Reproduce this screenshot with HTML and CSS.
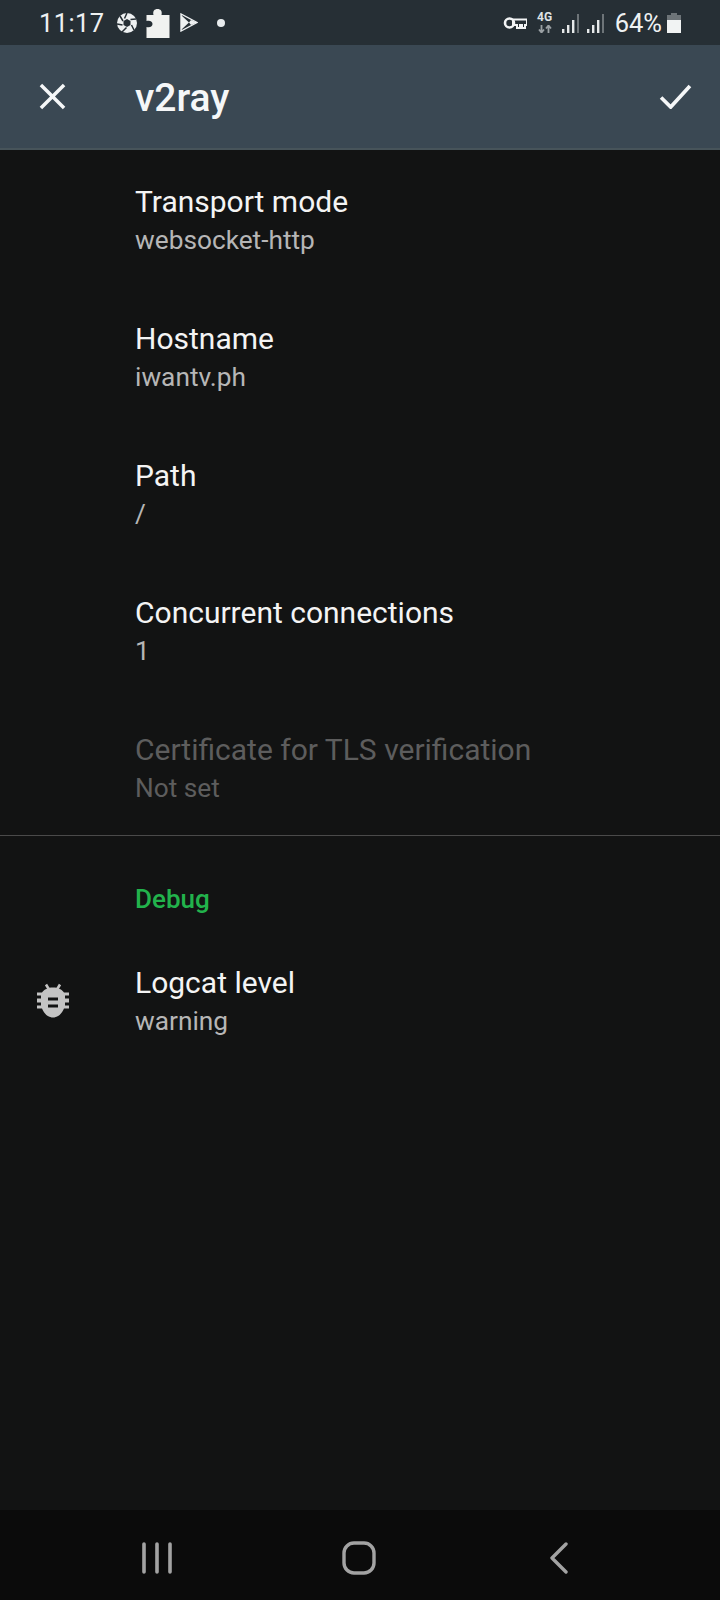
FILE: index.html
```html
<!DOCTYPE html>
<html lang="en">
<head>
<meta charset="utf-8">
<title>v2ray</title>
<link rel="stylesheet" href="styles.css">
</head>
<body>
<div class="screen">
  <div class="status">
    <div class="status-left">
      <span class="time">11:17</span>
      <svg class="ic-shutter" viewBox="0 0 20 20"><circle cx="10" cy="10" r="10" fill="#eef1f2"/><path d="M7.5 5.5 10 0M13.5 6.5 19 6M14.5 12 17 17M9.5 14.5 5 19M5.5 12 0 11M6 8 3 3" stroke="#262f35" stroke-width="1.5" fill="none"/><path d="M10 6 13.5 8V12L10 14 6.5 12V8Z" fill="#262f35"/></svg>
      <svg class="ic-puzzle" viewBox="0 0 24 30"><path d="M1 7H8C7 3 9 1 12 1S17 3 16 7H24V30H1V19C5 20 7 18 7 16S5 12 1 13Z" fill="#f1f2f0"/></svg>
      <svg class="ic-play" viewBox="0 0 18 19"><path d="M1 1V18L17 9.5Z" fill="none" stroke="#eef1f2" stroke-width="1.4"/><path d="M1 2 9 9.5 1 17ZM11 7 17 9.5 11 12 9 9.5Z" fill="#eef1f2"/></svg>
      <span class="dot"></span>
    </div>
    <div class="status-right">
      <svg class="ic-key" viewBox="0 0 24 14"><circle cx="6.5" cy="7" r="4.5" fill="none" stroke="#f2f4f5" stroke-width="2.6"/><path d="M10 3.5H24V9H22V12H19V9H17V12H14V9H10Z" fill="none" stroke="#f2f4f5" stroke-width="2"/></svg>
      <div class="net">
        <span class="net-label">4G</span>
        <svg class="ic-arrows" viewBox="0 0 14 8"><path d="M3.5 0V7M1 4.5 3.5 7.5 6 4.5" stroke="#9aa0a4" stroke-width="1.8" fill="none"/><path d="M10.5 8V1M8 3.5 10.5 .5 13 3.5" stroke="#9aa0a4" stroke-width="1.8" fill="none"/></svg>
      </div>
      <svg class="ic-signal" viewBox="0 0 20 20"><path d="M1 16h2.4v4H1zM6 12h2.4v8H6zM11 7h2.4v13H11z" fill="#e6e9ea"/><path d="M16 1h2v19h-2z" fill="#6d7478"/></svg>
      <svg class="ic-signal" viewBox="0 0 20 20"><path d="M1 16h2.4v4H1zM6 12h2.4v8H6zM11 7h2.4v13H11z" fill="#e6e9ea"/><path d="M16 1h2v19h-2z" fill="#6d7478"/></svg>
      <span class="battery-text">64%</span>
      <svg class="ic-battery" viewBox="0 0 14 20"><path d="M4 0h6v2h4v6H0V2h4z" fill="#6d7478"/><path d="M0 7h14v13H0z" fill="#f1f3f3"/></svg>
    </div>
  </div>
  <header class="toolbar">
    <svg class="ic-close" viewBox="0 0 28 28"><path d="M2 2 26 26M26 2 2 26" stroke="#f5f7f8" stroke-width="3.6" fill="none"/></svg>
    <h1 class="toolbar-title">v2ray</h1>
    <svg class="ic-check" viewBox="0 0 34 26"><path d="M2 14 12 24 32 2" stroke="#f5f7f8" stroke-width="3.8" fill="none"/></svg>
  </header>
  <main class="content">
    <div class="row"><div class="row-icon"></div><div><div class="title">Transport mode</div><div class="sub">websocket-http</div></div></div>
    <div class="row"><div class="row-icon"></div><div><div class="title">Hostname</div><div class="sub">iwantv.ph</div></div></div>
    <div class="row"><div class="row-icon"></div><div><div class="title">Path</div><div class="sub">/</div></div></div>
    <div class="row"><div class="row-icon"></div><div><div class="title">Concurrent connections</div><div class="sub">1</div></div></div>
    <div class="row disabled"><div class="row-icon"></div><div><div class="title">Certificate for TLS verification</div><div class="sub">Not set</div></div></div>
    <div class="divider"></div>
    <div class="category">Debug</div>
    <div class="row row-debug">
      <div class="row-icon">
        <svg class="ic-bug" viewBox="0 0 32 34"><path d="M9 1 12 6M23 1 20 6" stroke="#c4c4c4" stroke-width="2.6" fill="none"/><path d="M16 4C21 4 25 6 27 9H32V12H28V15H32V19H28V22H32V25H27C25 30 21 34 16 34S7 30 5 25H0V22H4V19H0V15H4V12H0V9H5C7 6 11 4 16 4Z" fill="#c4c4c4"/><path d="M11 14H21V17H11ZM11 21H21V24H11Z" fill="#121313"/></svg>
      </div>
      <div><div class="title">Logcat level</div><div class="sub">warning</div></div>
    </div>
  </main>
  <nav class="navbar">
    <svg class="ic-recents" viewBox="0 0 32 32"><path d="M3 2V30M16 2V30M29 2V30" stroke="#a3a3a3" stroke-width="3.6" stroke-linecap="round" fill="none"/></svg>
    <svg class="ic-home" viewBox="0 0 34 34"><rect x="2" y="2" width="30" height="30" rx="10" stroke="#a3a3a3" stroke-width="3.4" fill="none"/></svg>
    <svg class="ic-back" viewBox="0 0 20 32"><path d="M17 2 3 16 17 30" stroke="#a3a3a3" stroke-width="3.4" stroke-linecap="round" stroke-linejoin="round" fill="none"/></svg>
  </nav>
</div>
</body>
</html>
```
FILE: styles.css
```css
* { box-sizing: border-box; }
html, body { margin: 0; padding: 0; background: #121313; }
.screen {
  width: 720px;
  height: 1600px;
  display: flex;
  flex-direction: column;
  font-family: Roboto, "Liberation Sans", sans-serif;
  color: #fff;
  overflow: hidden;
}
.status {
  height: 45px;
  flex: none;
  background: #262f35;
  display: flex;
  justify-content: space-between;
  align-items: center;
  padding: 0 39px;
}
.status-left, .status-right { display: flex; align-items: center; }
.time { font-size: 25.5px; color: #eef1f2; letter-spacing: 0.4px; width: 78px; }
.ic-shutter { width: 20px; height: 20px; margin-right: 8px; }
.ic-puzzle { width: 25px; height: 30px; margin-right: 10px; }
.ic-play { width: 18px; height: 19px; }
.dot { width: 8px; height: 8px; border-radius: 50%; background: #e8ecee; margin-left: 19px; }
.ic-key { width: 24px; height: 14px; margin-right: 10px; }
.net { display: flex; flex-direction: column; align-items: center; width: 16px; margin-right: 8px; margin-top: -1px; }
.net-label { font-size: 12px; line-height: 12px; font-weight: 700; color: #dfe3e5; }
.ic-arrows { width: 14px; height: 8px; margin-top: 2px; }
.ic-signal { width: 20px; height: 20px; margin-right: 5px; }
.battery-text { font-size: 25.5px; color: #eef1f2; margin-left: 4px; margin-right: 5px; }
.ic-battery { width: 14px; height: 20px; }
.toolbar {
  height: 105px;
  flex: none;
  background: #3a4853;
  border-bottom: 2px solid #47545a;
  display: flex;
  align-items: center;
  padding: 0 28px 0 39px;
}
.ic-close { width: 27px; height: 27px; flex: none; }
.toolbar-title { flex: 1; margin: 2px 0 0 69px; font-size: 39px; font-weight: 500; color: #f5f7f8; }
.ic-check { width: 33px; height: 25px; flex: none; }
.content { flex: 1; background: #121313; }
.row { display: flex; height: 137px; padding-top: 33px; }
.row-icon { width: 135px; flex: none; display: flex; justify-content: center; }
.title { font-size: 30px; line-height: 38px; color: #f4f4f4; }
.sub { font-size: 26.25px; line-height: 38px; color: #b6b6b6; }
.disabled .title, .disabled .sub { color: #5d5d5d; }
.divider { height: 1px; background: #4a4a4a; }
.category { height: 94px; padding: 45px 0 0 135px; font-size: 26px; line-height: 36px; font-weight: 500; color: #22b24c; }
.row-debug { padding-top: 34px; }
.row-debug .row-icon { padding: 19px 0 0 37px; justify-content: flex-start; }
.ic-bug { width: 32px; height: 35px; flex: none; }
.navbar {
  height: 90px;
  flex: none;
  background: #0b0b0b;
  display: flex;
  align-items: center;
  padding-top: 5px;
}
.ic-recents { width: 32px; height: 32px; margin-left: 141px; }
.ic-home { width: 34px; height: 34px; margin-left: 169px; }
.ic-back { width: 20px; height: 32px; margin-left: 173px; }
```
